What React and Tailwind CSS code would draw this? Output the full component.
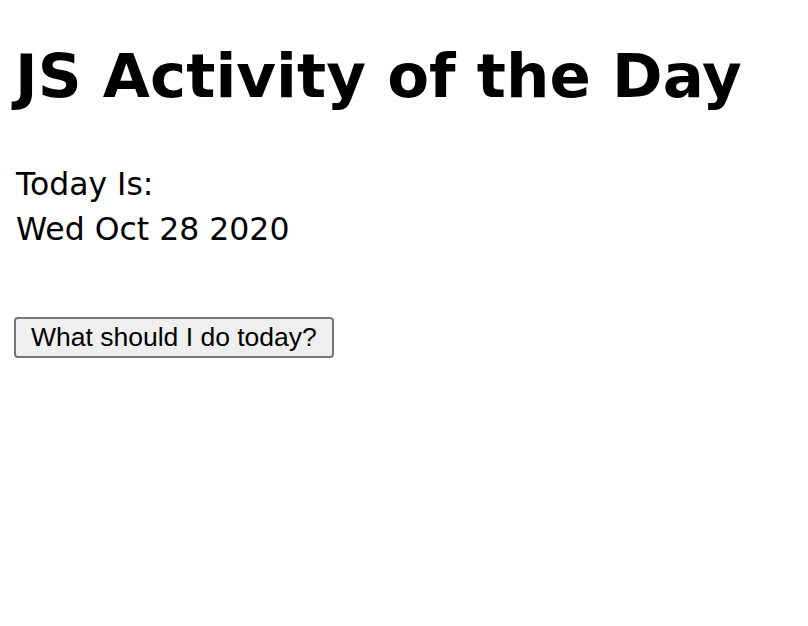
export default function App() {
  return (
    <div className="min-h-screen bg-white px-[16px] pt-[36px] text-black">
      <h1 className="-ml-[1px] font-['DejaVu_Sans',sans-serif] text-[61px] font-bold leading-[80px]">
        JS Activity of the Day
      </h1>
      <div className="mt-[46px] font-['DejaVu_Sans',sans-serif] text-[31.5px] leading-[45px]">
        <p>Today Is:</p>
        <p>Wed Oct 28 2020</p>
      </div>
      <button className="-ml-[2px] mt-[65px] h-[41px] rounded-[4px] border-2 border-[#767676] bg-[#efefef] px-[15px] font-['Liberation_Sans',Arial,sans-serif] text-[26.5px] leading-none">
        What should I do today?
      </button>
    </div>
  );
}
